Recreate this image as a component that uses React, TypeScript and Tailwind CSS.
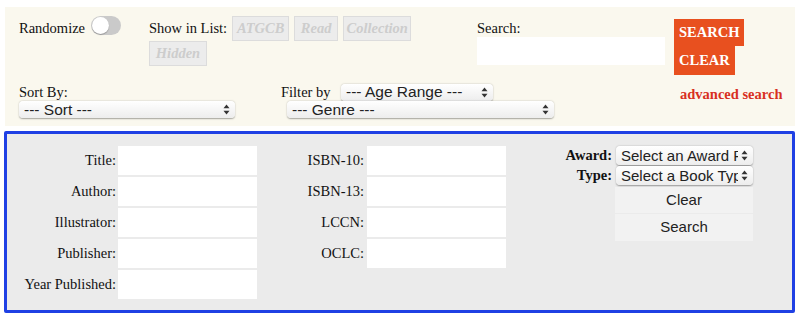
import React from "react";

const serif = "font-['Liberation_Serif',serif]";
const sans = "font-['Liberation_Sans',Arial,sans-serif]";

function Arrows() {
  return (
    <svg width="7" height="11" viewBox="0 0 7 11" className="shrink-0">
      <path d="M3.5 0.5 L6.5 4.3 L0.5 4.3 Z" fill="#333" />
      <path d="M3.5 10.5 L6.5 6.7 L0.5 6.7 Z" fill="#333" />
    </svg>
  );
}

function FakeSelect({ label, className, small }: { label: string; className: string; small?: boolean }) {
  return (
    <div
      className={`flex items-center gap-[3px] rounded-[4px] bg-linear-to-b from-white to-[#ededed] pl-[5px] pr-[5px] shadow-[0_0.5px_1.5px_rgba(0,0,0,0.35)] ${sans} ${small ? "text-[15px]" : "text-[15.5px]"} leading-none text-[#222] whitespace-nowrap ${className}`}
    >
      <span className="min-w-0 flex-1 overflow-hidden">{label}</span>
      <Arrows />
    </div>
  );
}

function ListTag({ label, width }: { label: string; width: string }) {
  return (
    <span className={`flex h-[25px] items-center justify-center border border-[#dcdcdc] bg-[#ececec] text-[14.5px] font-bold italic text-[#cdcdcd] ${width}`}>
      {label}
    </span>
  );
}

function Field({ label }: { label: string }) {
  return (
    <>
      <label className="flex h-[29px] items-center justify-end">{label}</label>
      <div className="h-[29px] bg-white" />
    </>
  );
}

export default function App() {
  return (
    <div className={`min-h-screen bg-white pt-[7px] ${serif} text-[14.5px] text-[#111]`}>
      {/* quick search bar */}
      <div className="mx-[5px] h-[119px] bg-[#faf8ee] pl-[14px] pt-[9px]">
        <div className="flex items-start">
          <div className="flex w-[130px] items-start">
            <span className="leading-[25px]">Randomize</span>
            <span className="ml-[6px] flex h-[19px] w-[30px] items-center rounded-full bg-[#cacaca] px-[1px]">
              <span className="h-[17px] w-[17px] rounded-full bg-white shadow-[0_1px_1px_rgba(0,0,0,0.25)]" />
            </span>
          </div>
          <div className="flex w-[328px] items-start">
            <div className="flex w-[290px] flex-wrap gap-x-[5px]">
              <span className="leading-[25px]">Show in List:</span>
              <ListTag label="ATGCB" width="w-[57px]" />
              <ListTag label="Read" width="w-[44px]" />
              <ListTag label="Collection" width="w-[68px]" />
              <ListTag label="Hidden" width="w-[58px]" />
            </div>
          </div>
          <div className="flex w-[197px] flex-col">
            <span className="pt-[4px] leading-[17px]">Search:</span>
            <div className="h-[28px] w-[188px] bg-white" />
          </div>
          <div className="mt-[3px] flex flex-col items-start text-[14.5px] font-bold text-white">
            <button className="h-[27px] bg-[#e8501f] px-[5px] leading-[27px]">SEARCH</button>
            <button className="h-[29px] bg-[#e8501f] px-[5px] leading-[29px]">CLEAR</button>
          </div>
        </div>

        <div className="mt-[8px] flex items-start">
          <div className="flex w-[262px] flex-col">
            <span className="leading-[18px]">Sort By:</span>
            <FakeSelect label="--- Sort ---" className="h-[17px] w-[216px]" />
          </div>
          <div className="flex w-[399px] flex-col">
            <div className="flex items-center">
              <span className="w-[60px] leading-[18px]">Filter by</span>
              <FakeSelect label="--- Age Range ---" className="h-[17px] w-[152px]" />
            </div>
            <FakeSelect label="--- Genre ---" className="ml-[6px] h-[17px] w-[267px]" />
          </div>
          <a className="pt-[2px] font-bold leading-[18px] text-[#d8301f]">advanced search</a>
        </div>
      </div>

      {/* advanced search panel */}
      <div className="ml-[4px] mt-[5px] flex h-[182px] w-[791px] items-start rounded-[2px] border-[3px] border-[#1f40e4] bg-[#ebebeb] pl-[10px] pt-[12px]">
        <div className="grid grid-cols-[99px_139px] gap-x-[2px] gap-y-[2px]">
          <Field label="Title:" />
          <Field label="Author:" />
          <Field label="Illustrator:" />
          <Field label="Publisher:" />
          <Field label="Year Published:" />
        </div>
        <div className="ml-[40px] grid grid-cols-[67px_139px] gap-x-[3px] gap-y-[2px]">
          <Field label="ISBN-10:" />
          <Field label="ISBN-13:" />
          <Field label="LCCN:" />
          <Field label="OCLC:" />
        </div>
        <div className="ml-[50px] grid grid-cols-[56px_137px] gap-x-[4px]">
          <label className="flex h-[19px] items-center justify-end font-bold">Award:</label>
          <FakeSelect label="Select an Award Range" className="h-[19px]" small />
          <label className="mt-[1px] flex h-[19px] items-center justify-end font-bold">Type:</label>
          <FakeSelect label="Select a Book Type" className="mt-[1px] h-[19px]" small />
          <div />
          <div className={`mt-[2px] -ml-[1px] flex flex-col ${sans} text-[15px] text-[#222]`}>
            <button className="h-[26px] w-[138px] bg-[#f2f2f2]">Clear</button>
            <button className="mt-[1px] h-[27px] w-[138px] bg-[#f2f2f2]">Search</button>
          </div>
        </div>
      </div>
    </div>
  );
}
